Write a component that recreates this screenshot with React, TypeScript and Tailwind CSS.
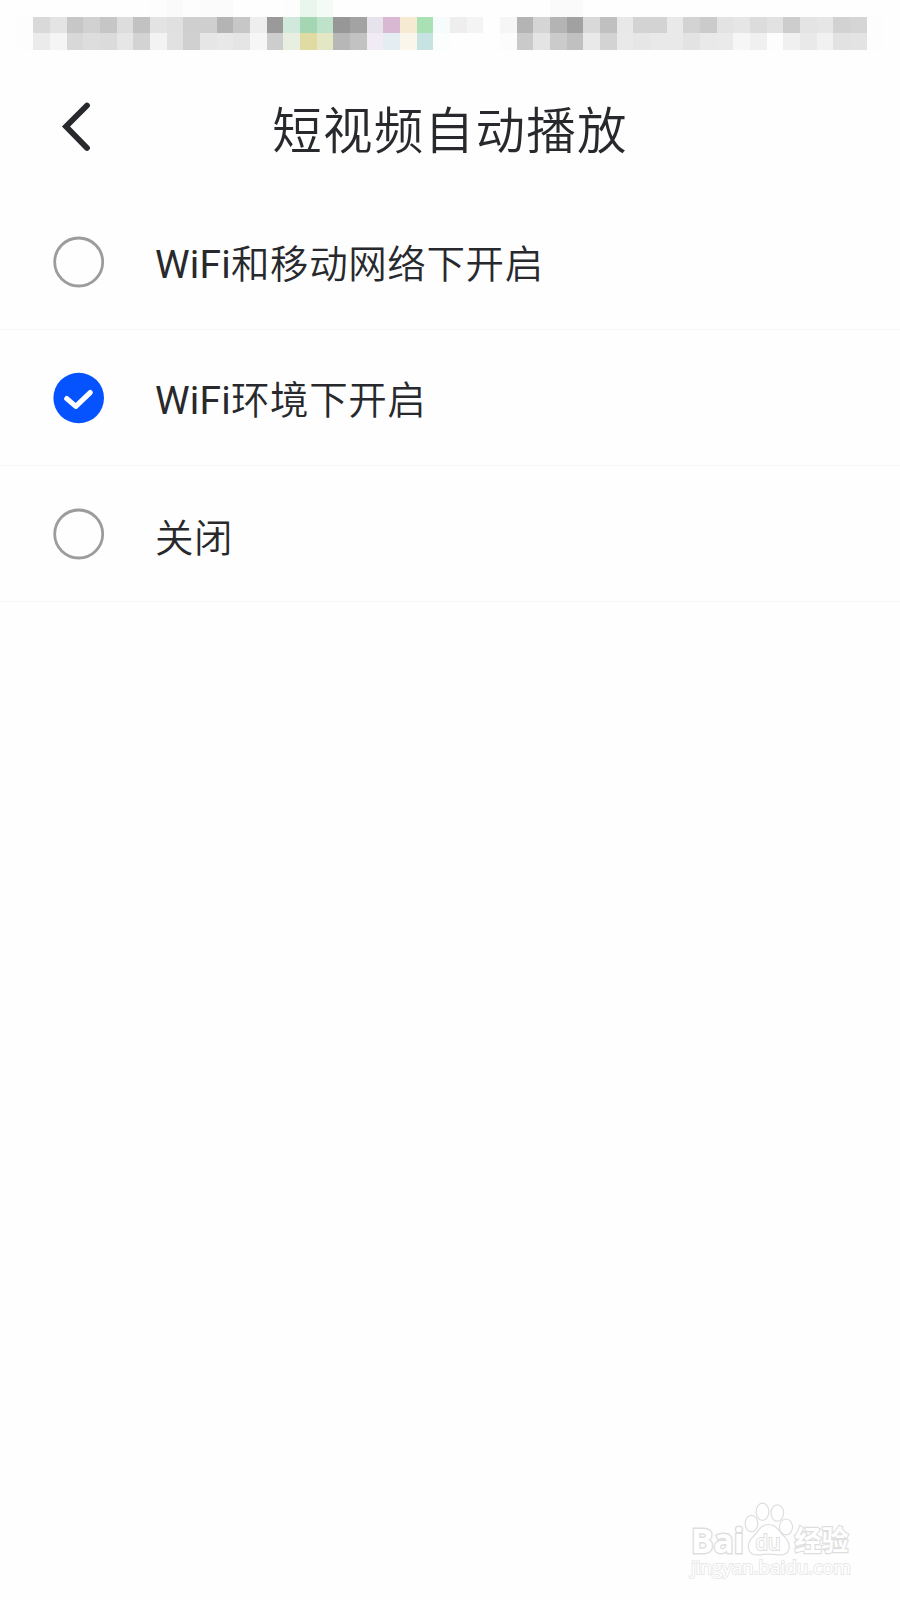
import React, { useState } from "react";
import clsx from "clsx";

type Option = {
  id: string;
  latin?: string;
  label: string;
}

const options: Option[] = [
  { id: "all", latin: "WiFi", label: "和移动网络下开启" },
  { id: "wifi", latin: "WiFi", label: "环境下开启" },
  { id: "off", label: "关闭" }
];

// status bar mosaic, 54 cells per row
const mosaic = [
  "fe fe fe fe fe fe fe fe fe fd fa fd fb fb fe fe fe fd e8f6ee f4faf6 fe fe fe fe fe fe fe fe fe fe fe fe fe fa fa fe fe fe fe fe fe fe fe fe fe fe fe fe fe fe fe fe fe fe",
  "fe fd d9 e4 c7 d1 c6 dd c2 e3 e0 cf cf b4 c7 ee 9a d1e9dc a5d6b4 bfe3ca 97 a3 e6e3ec d8b8d3 f6ebd2 a9e1b4 f5fcfb ee f4 fe f6 b4 d5 b4 a1 d9 c0 e8 d3 d3 e9 d3 cb e3 e6 dc e2 cd e4 e6 d2 d5 fd fe",
  "fe fd eb f5 d8 dd db e6 d3 f3 e1 d0 e6 e8 e5 f6 cd e9efe0 e0daa3 e3e7c4 b7 c2 f1ebf3 e4edf2 faf6ec c7e3e1 fcfefe fe fe fe fc ca e4 cb c0 e9 d3 e9 e6 e9 e9 e3 e9 ea f6 f0 fd f0 e9 f1 e2 e3 fd fe"
].map((row) => row.split(" ").map((c) => `#${c.length === 2 ? c.repeat(3) : c}`));

function StatusBar() {
  return (
    <div className="grid h-[50px] grid-rows-3">
      {mosaic.map((row, y) => (
        <div className="grid grid-cols-54" key={y}>
          {row.map((color, x) => (
            <div key={x} style={{ backgroundColor: color }} />
          ))}
        </div>
      ))}
    </div>
  )
}

function Header() {
  return (
    <header className="grid h-[144px] grid-cols-[150px_1fr_150px] items-start">
      <button className="mt-[50px] ml-[60px] h-[54px] w-8" aria-label="返回">
        <svg viewBox="0 0 32 54" className="h-[54px] w-8" fill="none">
          <path
            d="M27 5.5 6 26.5 27 48"
            stroke="#28292c"
            strokeWidth="5.8"
            strokeLinecap="round"
            strokeLinejoin="miter"
          />
        </svg>
      </button>
      <h1 className="mt-[42px] text-center text-[49.5px] leading-[72px] font-[350] tracking-[1.3px] whitespace-nowrap text-[#28292c]">
        短视频自动播放
      </h1>
    </header>
  )
}

function Radio({ checked }: { checked: boolean }) {
  return (
    <svg viewBox="0 0 52 52" className="size-[52px] shrink-0" fill="none">
      {checked ? (
        <>
          <circle cx="25.7" cy="26" r="25.3" fill="#0453fe" />
          <path
            d="M13.8 26.6 22.8 34.4 37.2 20.6"
            stroke="#fff"
            strokeWidth="5.2"
            strokeLinecap="round"
            strokeLinejoin="round"
          />
        </>
      ) : (
        <circle cx="25.7" cy="26" r="24" stroke="#9b9c9e" strokeWidth="2.8" />
      )}
    </svg>
  )
}

function Watermark() {
  return (
    <svg viewBox="0 0 200 100" className="h-[100px] w-[200px]">
      <g fill="#fff" stroke="#dedede" strokeWidth="1.2">
        <text x="21" y="62.5" fontFamily="Open Sans" fontWeight="700" fontSize="34" textLength="53" lengthAdjust="spacingAndGlyphs" strokeWidth="2.8" paintOrder="stroke">Bai</text>
        <ellipse cx="81.5" cy="33.5" rx="6.3" ry="8.2" />
        <ellipse cx="92.5" cy="21.8" rx="6.3" ry="8.6" />
        <ellipse cx="107.3" cy="23" rx="6.3" ry="8.2" />
        <ellipse cx="116" cy="37" rx="6.5" ry="8" />
        <path d="M98.5 34.5C92 34.5 89.500 39 86.500 43C82.500 47.500 77.500 51 78.500 58C79.500 64 84 65.500 89 64.800C95 64 102 64 108 64.800C113.500 65.500 118 64 119 58.500C120 51.500 115.500 48 111.500 43.500C108 39 105 34.500 98.500 34.500Z" />
        <text x="85.5" y="60" fontFamily="Open Sans" fontSize="21" textLength="25" lengthAdjust="spacingAndGlyphs" strokeWidth="2" paintOrder="stroke">du</text>
        <text x="124.5" y="61" fontFamily="Noto Sans CJK SC" fontWeight="700" fontSize="28" textLength="54" lengthAdjust="spacingAndGlyphs" strokeWidth="2.4" paintOrder="stroke">经验</text>
      </g>
      <text x="21" y="84" fontFamily="Open Sans" fontSize="18" textLength="160" lengthAdjust="spacingAndGlyphs" fill="#fff" stroke="#e8e8e8" strokeWidth="1.8" paintOrder="stroke">
        jingyan.baidu.com
      </text>
    </svg>
  )
}

export default function App() {
  const [selected, setSelected] = useState("wifi");

  return (
    <div className="flex h-[1600px] w-[900px] flex-col overflow-hidden bg-[#fefefe] font-['Noto_Sans_CJK_SC',sans-serif]">
      <StatusBar />
      <Header />
      <ul>
        {options.map(({ id, latin, label }) => (
          <li
            className={clsx(
              "flex h-[136px] cursor-pointer items-center border-b border-[#f6f6f6] pl-[53px] text-[#28292c]",
              selected === id && "cursor-default"
            )}
            key={id}
            onClick={() => setSelected(id)}
          >
            <Radio checked={selected === id} />
            <p className="ml-[50px] flex items-baseline pt-[3px] text-[38.5px] leading-[56px] font-[350] tracking-[0.6px]">
              {latin && (
                <span className="font-[Roboto,sans-serif] text-[39px] font-normal tracking-[0.2px]">{latin}</span>
              )}
              {label}
            </p>
          </li>
        ))}
      </ul>
      <div className="mt-auto mr-[30px] mb-[10px] self-end">
        <Watermark />
      </div>
    </div>
  )
}
